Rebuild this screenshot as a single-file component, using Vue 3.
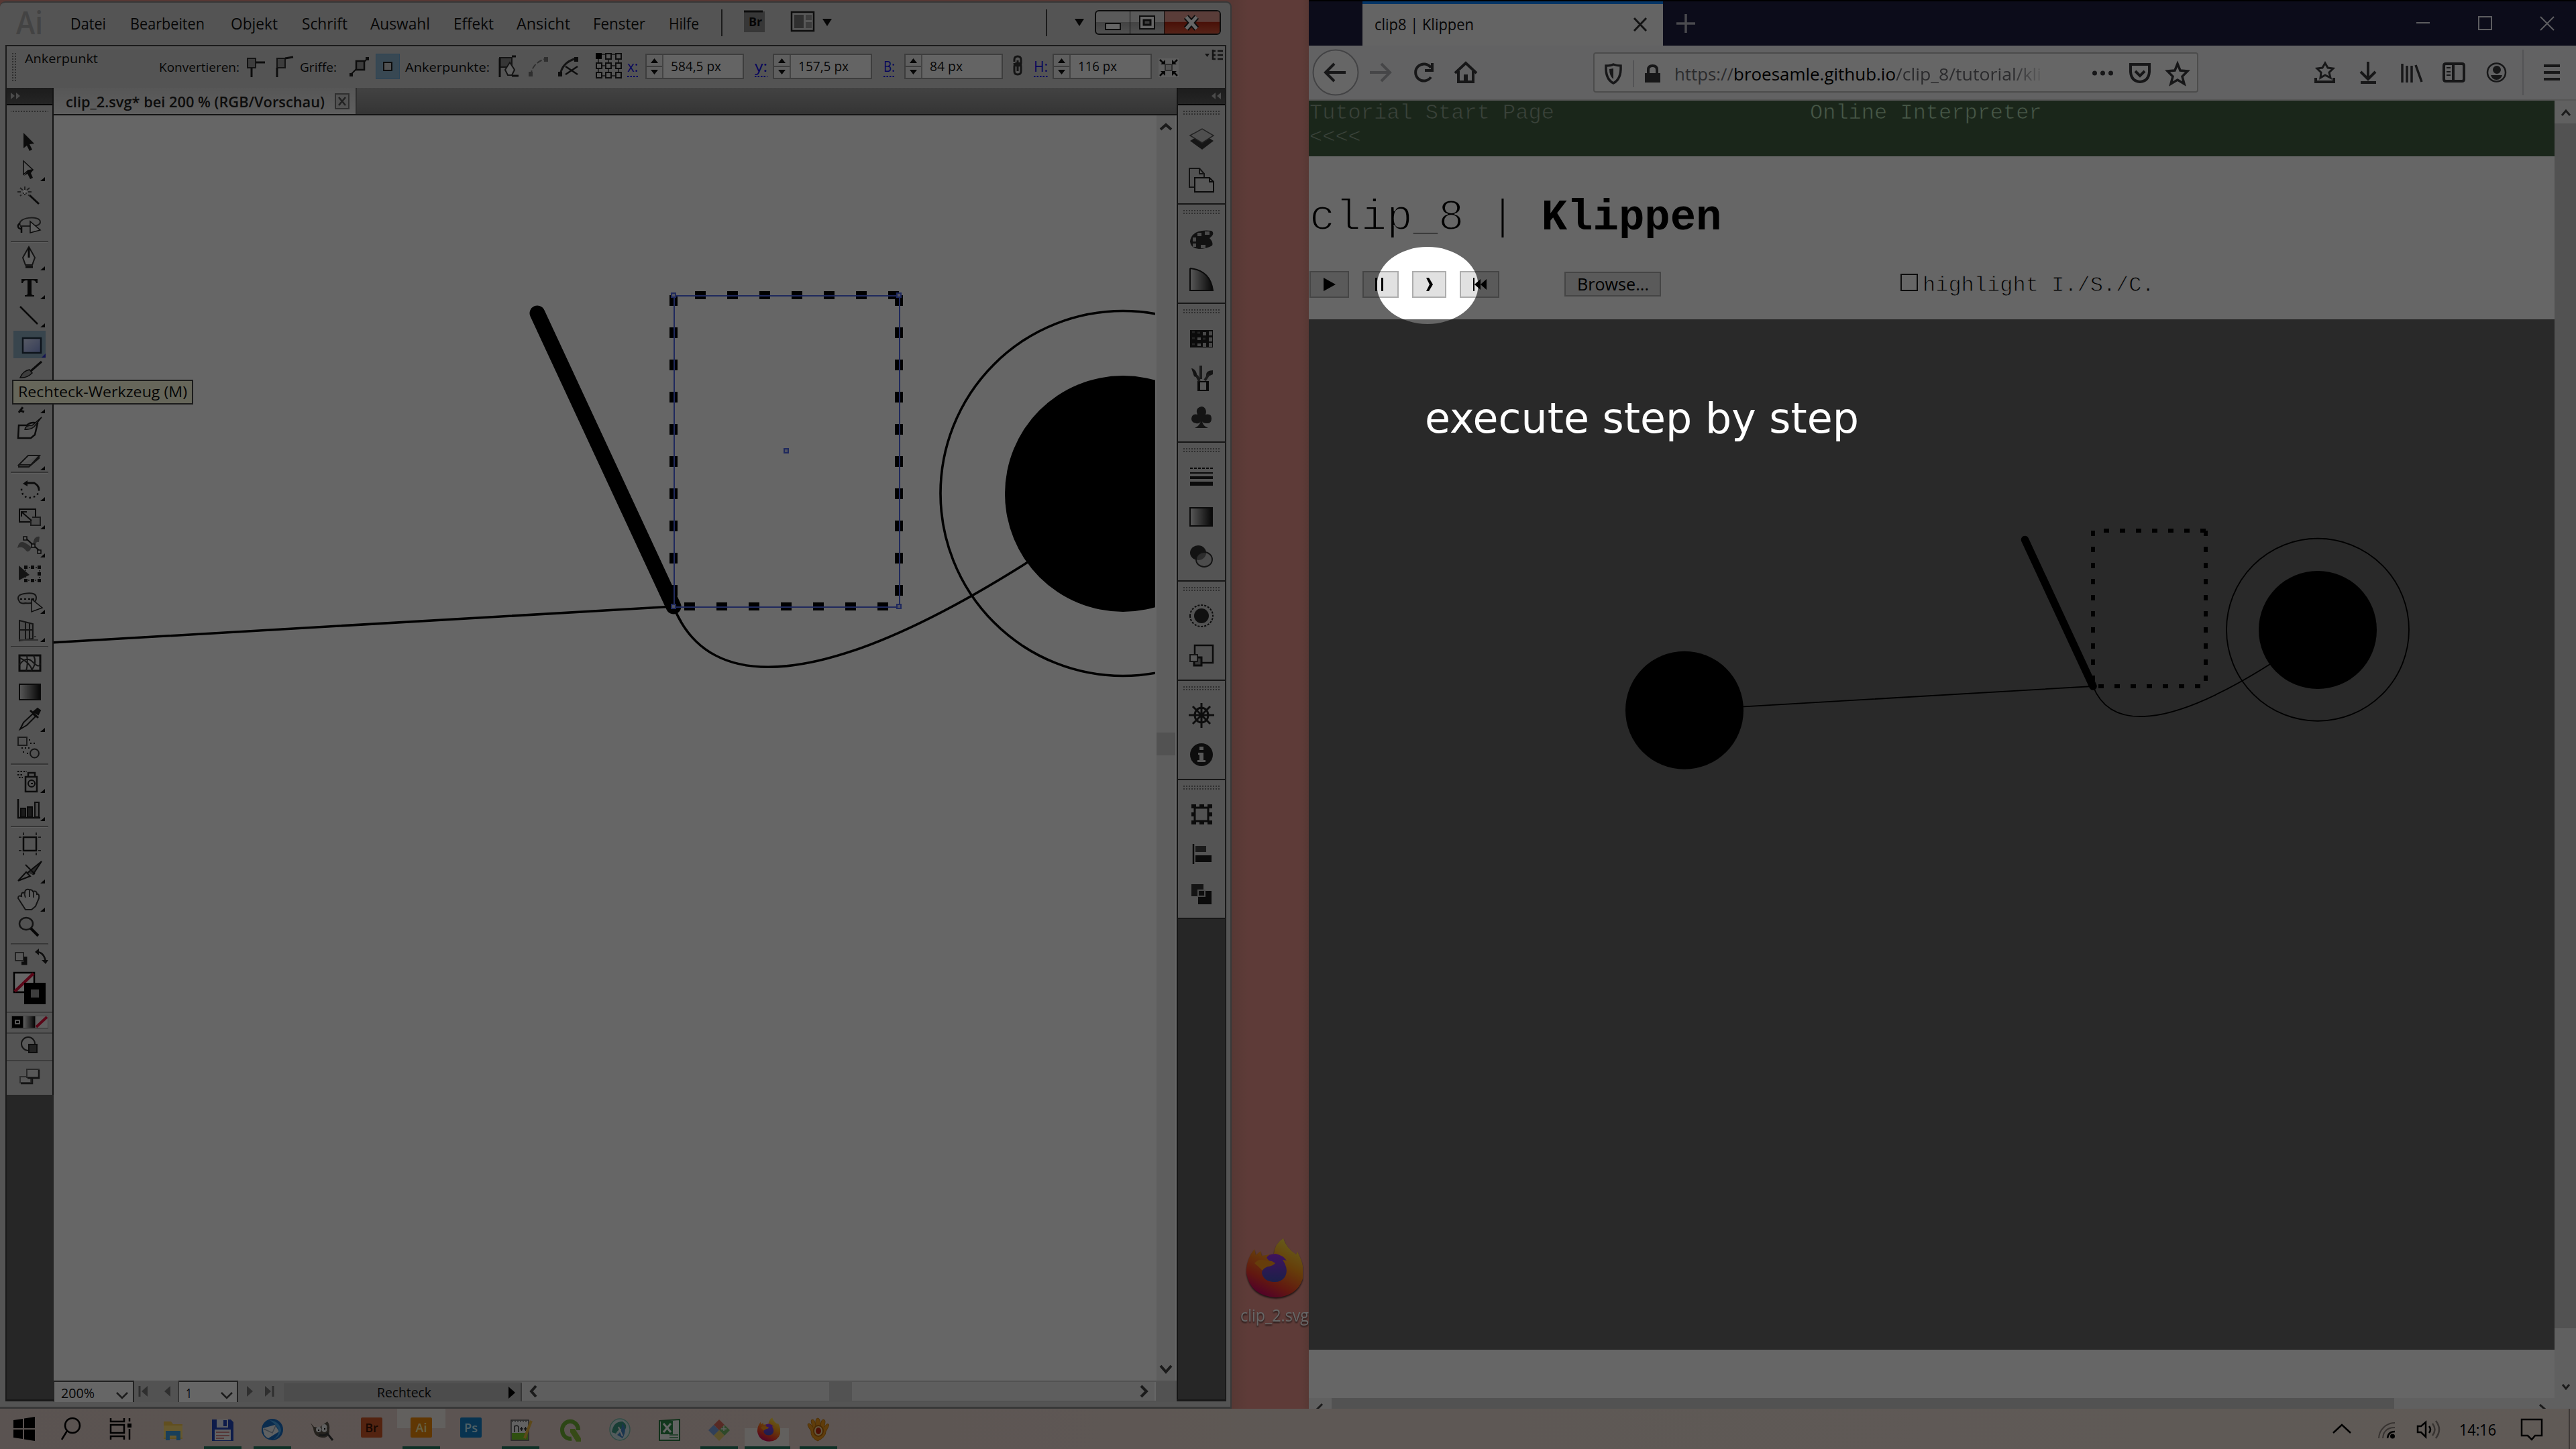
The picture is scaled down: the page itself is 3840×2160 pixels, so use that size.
<script setup>
import { h } from 'vue'

// Single line of real text, fitted to a given advance width.
const T = (p) =>
  h('svg', { width: p.w + (p.gap || 0), height: p.h || 40, class: 'txt' }, [
    h('text', {
      x: p.gap || 0, y: p.b || 28, textLength: p.w, lengthAdjust: 'spacingAndGlyphs',
      'font-size': p.s || 24, fill: 'currentColor'
    }, p.t)
  ])

// Icon: list of [path, fill, stroke, stroke width, dash].
const Glyph = (p) =>
  h('svg', { width: p.w, height: p.h, viewBox: `0 0 ${p.w} ${p.h}` },
    p.d.map((e) => h('path', {
      d: e[0], fill: e[1] || 'none', stroke: e[2] || 'none', 'stroke-width': e[3] || 2, 'stroke-dasharray': e[4]
    })))

// The clip_8 drawing shared by the editor and the browser page.
const Drawing = () =>
  h('g', { fill: 'none', stroke: '#000', 'stroke-width': 3.6 }, [
    h('path', { d: 'M-215 975L1004 904C1056 1035 1225 1032 1532 838' }),
    h('circle', { cx: -214, cy: 975.5, r: 176, fill: '#000', stroke: 'none' }),
    h('circle', { cx: 1674, cy: 735.5, r: 272 }),
    h('circle', { cx: 1674, cy: 736, r: 176, fill: '#000', stroke: 'none' }),
    h('path', { d: 'M801 467L1004 904', 'stroke-width': 23, 'stroke-linecap': 'round' }),
    h('path', { d: 'M1340 440V904H1004V440H1340', 'stroke-width': 12, 'stroke-dasharray': '16 32' })
  ])

const K = '#1c1c1c'
const FLY = ['M50 38h7v-6z', '#111']
const toolGroups = [
  [
    [['M25 8l16 16-7 1 4 8-4 2-4-8-5 4z', '#1c1c1c']],
    [['M25 8l14 13-7 1-7 6z', '#ddd', K, 1.5], ['M32 22l8-1-4 5 3 7-4 2-4-8-5 3z', K], FLY],
    [['M34 17l14 13', '', K, 3], ['M16 12h22M27 4v16M20 6l14 12M34 6l-14 12', '', '#555', 2, '5 3'], ['M24 12h6M27 9v6', '', '#fff', 2]],
    [['M20 20c-6-12 30-16 30-5 0 5-8 6-14 6H20', '', '#444', 2], ['M20 17a4 4 0 1 0 2 8M22 22v9', '', K, 2.5], ['M35 14l15 13-15 4z', '#eee', K, 1.5]]
  ],
  [
    [['M33 3l9 16-4 11H28l-4-11z', '#e8e8e8', '#333', 2], ['M33 4v15M28 33h11', '', K, 3], FLY],
    [['M22 8h24v6h-2q-1-4-5-4h-2v20q0 2 4 2v2H27v-2q4 0 4-2V10h-2q-4 0-5 4h-2z', '#151515'], FLY],
    [['M20 7L46 33', '', K, 2.5], FLY],
    [],
    [['M52 4L36 18', '', K, 3], ['M20 28q4-10 14-12l4 5q-8 8-18 7z', '#999', K, 1.5]],
    [['M18 37l6-8M20 34l6 2', '', K, 3], FLY],
    [['M18 14h12q6-6 16-3l-4 17-6 5H17z', '#ddd', K, 2.5], ['M52 2L38 14q-10 0-11 6 8 1 14-4z', '#aaa', K, 1.5]],
    [['M18 30l14-14h17L36 30zM18 30v3h15l15-13v-4', '#e0e0e0', '#333', 2], FLY]
  ],
  [
    [['M24 12l7-5v9z', K], ['M27 11h14q6 3 7 9', '', K, 3], ['M48 20q0 12-14 13-12-1-12-14', '', K, 2.5, '2.5 4'], FLY],
    [['M19 8h24v19H19z', '#ccc', K, 2], ['M38 20h12v12H36v-8', '#bbb', '#444', 2], ['M22 12l15 13M22 19v-7h8', '', K, 2], FLY],
    [['M16 24q2-12 11-8 6 3 10 7-4 9-8 5-6-8-13-4zM39 18q2-13 10-11l-1 8q-5-2-6 7z', '#777'], ['M28 9l23 21', '', K, 2], ['M25 7h5v5h-5zM37 18h5v5h-5zM46 27h5v5h-5z', '#ddd', K, 1.5], FLY],
    [['M18 8l16 14-16 8z', '#333'], ['M28 11h21v19H28z', '', '#333', 1.5, '2 3'], ['M26 8h5v5h-5zM36 8h5v5h-5zM46 8h5v5h-5zM46 18h5v5h-5zM26 28h5v5h-5zM36 28h5v5h-5zM46 28h5v5h-5z', K]],
    [['M18 18q-4-8 8-10 18-3 18 6 0 10-16 8-8 2-10-4z', '#ccc', '#333', 2], ['M20 16h22', '', K, 2, '3 3'], ['M37 16l16 13-16 6z', '#ddd', K, 1.5], FLY],
    [['M19 6l20 5v22l-20 3zM19 20h20M28 8v26M34 10v24', '#bbb', '#333', 2], ['M19 35h28M39 30h5', '', '#777', 2], FLY]
  ],
  [
    [['M19 8h31v23H19z', '#ddd', K, 3], ['M19 22q10-14 20-4t11 2M30 8q2 12-1 23M40 8q6 12-4 23M20 12q14 6 18 18', '', '#333', 2]],
    [['M19 9h31v23H19z', 'url(#gray)', K, 2]],
    [['M40 8l6-5 4 3-3 6z', '#222', K, 2], ['M20 34l5-10 14-13 4 4-13 13z', '#ccc', K, 2], ['M35 6l12 11', '', K, 3], FLY],
    [['M17 4h13v12H17z', '#ccc', '#444', 2], ['M33 8h4M35 13h8M22 20h14M24 26h4M30 28h4', '', K, 2, '2 3'], ['M35 28a6 6 0 1 0 13 0 6 6 0 1 0-13 0', '#ccc', '#333', 2]]
  ],
  [
    [['M16 6h14M16 11h8M18 15h6', '', K, 2, '2.5 2'], ['M28 14h17v22H28zM32 8h10v6H32z', '#ccc', '#222', 2.5], ['M32 24a5 5 0 1 0 10 0 5 5 0 1 0-10 0M36 24h3', '', K, 2], FLY],
    [['M17 5v28h33', '', K, 2.5], ['M21 19h7v13h-7zM31 17h7v15h-7z', '#444', K, 2], ['M42 10h6v22h-6z', '#bbb', '#222', 2], FLY]
  ],
  [
    [['M25 11h19v20H25z', '', K, 2.5], ['M25 4v4M44 4v4M25 34v4M44 34v4M18 11h4M47 11h4M18 31h4M47 31h4', '', '#444', 2]],
    [['M17 34l12-13 6 6z', '#ccc', K, 2], ['M31 22l21-17-13 20M28 10l14 14', '#666', K, 2], FLY],
    [['M17 18q0-5 5-3-1-7 5-5 0-6 6-5 5 0 6 3 6-2 6 4 4-1 3 6l-5 12-6 5H28z', '#e2e2e2', '#333', 2], ['M26 10l2 7M34 6v10M40 9v8', '', '#444', 2], FLY],
    [['M19 14a10 9 0 1 0 20 0 10 9 0 1 0-20 0', '#ccc', '#333', 2.5], ['M36 21l11 11', '', '#111', 4]]
  ]
]

const dockGroups = [
  [
    [['M18 22l18-11 17 11-17 13z', '#383838'], ['M18 14l18-10 17 10-17 11z', '#c6c6c6', '#555', 1.5]],
    [['M17 4h15l7 8v20H17zM32 4v8h7', '#ccc', '#333', 2], ['M25 18h22l6 6v15H25zM47 18v6h6', '#ddd', K, 2]]
  ],
  [
    [['M18 24Q20 5 50 8q6 4-3 11 6 6 4 11-8 5-20 5-12-1-13-11z', '#2c2c2c'], ['M22 18h5v6h-5zM29 11h6v5h-6zM40 9h7v5h-7zM22 27h5v5h-5zM34 29h7v5h-7z', '#bbb']],
    [['M18 5v33h34Q48 8 18 5', 'url(#gray)', K, 2]]
  ],
  [
    [['M18 8h34v26H18z', K], ['M29 19h5v4h-5zM37 11h5v5h-5zM46 10h5v6h-5zM46 19h5v6h-5zM29 28h5v4h-5zM37 27h5v6h-5zM46 27h5v6h-5z', '#b5b5b5'], ['M21 11h4M21 20h4M21 29h4M29 12h4M37 21h4', '', '#555', 3]],
    [['M29 25h17v15H29z', K], ['M33 27h9v11h-9z', '#ddd'], ['M20 6q8 1 9 14l-5-2zM42 16q0-7 10-7v6q-5 3-10 3z', '#333'], ['M34 2v20M40 24l6-9M28 17l4 8', '', '#444', 4]],
    [['M35 3a7 8 0 0 1 6 12q9-2 9 6t-8 7q-5 0-6-3 1 7 9 10H25q7-3 9-10-2 4-7 3-7-1-7-7 1-8 9-6-4-10 6-12z', '#333']]
  ],
  [
    [['M18 7h34', '', K, 2, '4 2'], ['M18 14h34', '', K, 2], ['M18 21h34', '', K, 4], ['M18 30h34', '', K, 6]],
    [['M18 7h33v27H18z', 'url(#gray)', K, 2]],
    [['M18 14a12 11 0 1 1 24 0 12 11 0 1 1-24 0', '#303030'], ['M27 24a12 11 0 1 1 24 0 12 11 0 1 1-24 0', '#aaa8', '#333', 2]]
  ],
  [
    [['M18 20a17 16 0 1 1 34 0 17 16 0 1 1-34 0', '#d0d0d0', K, 2, '3 2'], ['M24 20a11 11 0 1 1 22 0 11 11 0 1 1-22 0', '#2a2a2a']],
    [['M25 5h27v26H25z', '#c8c8c8', K, 2.5], ['M24 23h11v12H24z', '#888', K, 3], ['M18 19h11v10H18z', '#ddd', '#333', 2]]
  ],
  [
    [['M25 20a10 11 0 1 1 20 0 10 11 0 1 1-20 0M35 2v37M16 20h38M22 7l26 26M48 7L22 33', '', '#222', 3]],
    [['M18 20a17 17 0 1 1 34 0 17 17 0 1 1-34 0', '#222'], ['M32 8h6v5h-6zM30 17h8v11h3v3H29v-3h3v-8h-2z', '#ddd']]
  ],
  [
    [['M25 10h20v20H25z', '#ccc', K, 3], ['M20 5h7v6h-7zM32 5h7v6h-7zM44 5h7v6h-7zM20 17h5v6h-5zM46 17h5v6h-5zM20 29h7v6h-7zM32 29h7v6h-7zM44 29h7v6h-7z', K]],
    [['M23 5v30', '', K, 2.5], ['M26 8h16v9H26z', '#444'], ['M26 22h24v10H26z', K]],
    [['M20 5h18v18H20z', '#333'], ['M30 15h20v20H30z', K], ['M30 14h10v9H30z', '#222', '#bbb', 2]]
  ]
]

const menus = [
  ['Datei', 53, 41], ['Bearbeiten', 111, 36], ['Objekt', 70, 39], ['Schrift', 68, 36], ['Auswahl', 89, 34],
  ['Effekt', 60, 35], ['Ansicht', 80, 34], ['Fenster', 78, 34], ['Hilfe', 45, 35]
]
const fields = [
  { k: 'x:', kw: 16, gap: 8, to: 11, v: '584,5 px', vw: 75 },
  { k: 'y:', kw: 19, gap: 16, to: 8, v: '157,5 px', vw: 75 },
  { k: 'B:', kw: 17, gap: 17, to: 14, v: '84 px', vw: 49 },
  { k: 'H:', kw: 21, gap: 13, to: 7, v: '116 px', vw: 58, chain: true }
]
const chain = [['M9 15v-3q0-5 5-5t5 5v5q0 4-5 4t-5-4M9 22q0-5 5-5t5 5v7q0 5-5 5t-5-5zM14 13v16', '', '#333', 3]]

const convertIcons = [
  ['M2 20h12v14H2z', '#999', '#333', 2], ['M14 26h14M8 34v14', '', '#222', 3],
  ['M46 20h12v14H46z', '#999', '#333', 2], ['M46 48V34M58 20l12-2', '', '#222', 3]
]
const handleIcons = [['M10 24h12v13H10z', '#999', '#222', 2.5], ['M1 45l9-9M22 25l6-6', '', '#222', 2], ['M0 42h5v5H0zM24 18h5v5h-5z', '#222']]
const pointIcons = [
  ['M2 19h18v14H2z', '#888', '#333', 2], ['M2 48V20M20 17h6M20 46h10', '', '#222', 3], ['M17 26l7 11-4 8h-6l-4-8z', '#eee', '#333', 2],
  ['M48 46q2-20 24-26', '', '#777', 2, '8 3'], ['M45 40h6v7h-6zM68 18h6v7h-6z', '#777'],
  ['M92 46q2-20 24-26', '', '#333', 3], ['M89 40h6v7h-6zM113 18h6v7h-6z', '#222'], ['M100 32l18 12M118 32l-18 12', '', '#222', 2.5]
]
const refGrid = [
  ['M2 14h36M2 31h36M2 46h36M5 12v34M20 12v34M35 12v34', '', '#333', 1.5],
  ['M1 12h9v9H1z', '#000'],
  ['M16 13h8v8h-8zM31 13h8v8h-8zM2 27h8v8H2zM16 27h8v8h-8zM31 27h8v8h-8zM2 41h8v8H2zM16 41h8v8h-8zM31 41h8v8h-8z', '#ddd', '#222', 2]
]
const expand = [
  ['M0 20h30v28H0z', '#e8e8e8'], ['M10 29h10v9H10z', '#ccc', '#777', 2],
  ['M2 22l6 6M28 22l-6 6M2 46l6-6M28 46l-6-6', '', '#111', 2.5], ['M3 29h7v-7zM27 29h-7v-7zM3 39h7v7zM27 39h-7v7z', '#111']
]

const task = [
  { n: 'files', d: [['M4 6h11l3 4h14v22H4z', '#f3c64f'], ['M4 12h28v18H4z', '#ffdb70'], ['M7 20h22v14h-6v-7H13v7H7z', '#3f9fe0']] },
  { n: 'save', run: 1, d: [['M2 3h28l4 4v28H2z', '#2348b8'], ['M9 3h17v12H9z', '#e6ebf5'], ['M19 4h5v9h-5z', '#2348b8'], ['M6 18h24v16H6z', '#f4f4f4'], ['M8 22h20M8 27h20M8 31h12', '', '#c66', 1.5]] },
  { n: 'mail', run: 1, d: [['M2 18A16 16 0 1 1 18 34Q6 33 2 22z', '#1b6fc4'], ['M4 16l18-5 6 10-16 10Q4 28 4 16z', '#eef2f6'], ['M5 17l13 6 5-11', '', '#9ab', 1.5], ['M14 4Q30 6 31 20q-3 10-12 13Q38 20 14 4z', '#4aa8ee']] },
  { n: 'gimp', d: [['M1 8l5 6 8 1 12-9q4 5 3 12 1 13-11 12-12-1-13-14z', '#5c564c'], ['M9 18a4 4 0 1 1 8 0 4 4 0 1 1-8 0M18 16a4 4 0 1 1 7 0 4 4 0 1 1-7 0', '#eee'], ['M12 18h2v2h-2zM21 16h2v2h-2z', '#000'], ['M14 26q8 2 12-2l8 10', '', '#3b3b3b', 3]] },
  { n: 'br', tx: 'Br', bg: '#d0592a', fg: '#3a1406' },
  { n: 'ai', tx: 'Ai', bg: '#f08a08', fg: '#fff2b0', run: 1, top: 1 },
  { n: 'ps', tx: 'Ps', bg: '#1480c8', fg: '#c6f0ff' },
  { n: 'npp', run: 1, d: [['M4 4h26v30H4z', '#f4f4f4', '#555', 1.5], ['M5 23h24v10H5z', '#77c828'], ['M5 5h24', '', '#777', 3, '2 2'], ['M9 22v-9q6-2 6 2v7M17 17h5M23 17h5M19.500 14v6M25.500 14v6', '', '#333', 1.500], ['M34 5L24 31', '', '#e9b642', 4]] },
  { n: 'qgis', d: [['M20 31.500A12 13 0 1 1 30 19', '', '#6fae36', 6], ['M18 17h7l9 14v5h-7l-9-14z', '#87b83a']] },
  { n: 'globe', d: [['M3 18A15 16 0 1 1 33 18 15 16 0 1 1 3 18', '#cfe3e6', '#7ba', 1.5], ['M6 22Q8 6 22 6q8 5 4 12-8-5-14 6z', '#3c9a84'], ['M21 9q9 8 1 22l-8-5q8-6 7-17z', '#4484c4'], ['M16 14l6 14', '', '#eee', 2]] },
  { n: 'xls', d: [['M3 5l30-2v31H3z', '#f4f8f4', '#2d7b45', 2], ['M5 5h18v20H5z', '#2f8a4a'], ['M9 9l11 13M20 9L9 22', '', '#fff', 3], ['M18 26h13M18 30h13', '', '#68a878', 2]] },
  { n: 'git', run: 1, d: [['M18 3l8 8-8 8-8-8z', '#d96a5c'], ['M10 11l8 8-8 8-8-8z', '#7ba0dc'], ['M26 11l8 8-8 8-8-8z', '#76b768'], ['M18 19l8 8-8 8-8-8z', '#e2c76a'], ['M25 12v8M21 17h8', '', '#eee', 1.5]] },
  { n: 'ff', ff: 1, run: 1, bottom: 1 },
  { n: 'hand', run: 1, d: [['M7 20Q-1 9 4 9q3 0 6 6Q5 3 9 3q4 0 5 10Q13 1 17 1t4 12Q22 2 26 3t0 12q5-7 7-5 2 1-4 11 0 8-12 14Q6 30 7 20z', '#f09a1c', '#c47a10', 1], ['M11 20a7 8 0 1 1 14 0 7 8 0 1 1-14 0', '#f8dca0', '#b86808', 2], ['M14 20a4 5 0 1 1 8 0 4 5 0 1 1-8 0', '#c02a10']] }
]
const winLogo = [['M20 17l14-2v14H20zM36 14.500l16-2.500v17H36zM20 31h14v14l-14-2zM36 31h16v17l-16-2.500z', '#000']]
const searchIcon = [['M25 25a11 11 0 1 1 22 0 11 11 0 1 1-22 0M28 33L20 46', '', '#000', 2.5]]
const viewIcon = [['M21 14v5h20v-5M21 46v-5h20v5M21 24h20v12H21zM49 14v5M49 30v16', '', '#000', 2.5], ['M46 22h6v6h-6z', '#000']]

const F = '#3a3a3e'
const navIcons = [
  ['M6.500 40a33.500 33.500 0 1 1 67 0 33.500 33.500 0 1 1-67 0', '#fff', '#a8a8ac', 2],
  ['M26 40h29M38 27L25 40l13 13', '', F, 4],
  ['M91 40h29M108 27l13 13-13 13', '', '#b0b0b4', 4],
  ['M182 33A12.500 12.500 0 1 0 182 47M184 26v11h-11', '', F, 4],
  ['M218 41l16-15 16 15M223 38v16h22V38', '', F, 4], ['M231 43h6v12h-6z', F]
]
const rightIcons = [
  ['M36 26l4 7 8 1-6 6 2 8-8-4-7 4 1-8-6-6 8-1z', '', F, 3], ['M22 48v6h27v-6', '', F, 4],
  ['M100 24v25M89 39l11 11 11-11M89 55h23', '', F, 4],
  ['M151 27v28M158 30v25M165 30v25M171 29l9 25', '', F, 3.500],
  ['M213 30q0-3 3-3h24q3 0 3 3v20q0 3-3 3h-24q-3 0-3-3zM227 27v26', '', F, 4], ['M217 33h6M217 39h6M217 44h6', '', F, 2],
  ['M278 40a13.500 13.500 0 1 1 27 0 13.500 13.500 0 1 1-27 0', '', F, 2.5], ['M286 36a6 6 0 1 1 12 0 6 6 0 1 1-12 0M283 44h17q-2 7-8.500 7t-8.500-7z', F],
  ['M331 6v68', '', '#d0d0d4', 2],
  ['M362 30h24M362 40h24M362 50h24', '', F, 4]
]
const urlLeft = [
  ['M17 18q7 0 11-2 5 2 11 2 1 20-11 26Q16 38 17 18z', '', F, 3.500], ['M28 22v16q-6-5-6-15z', F],
  ['M58 10v40', '', '#d0d0d4', 2],
  ['M75 29h23v14H75z', F], ['M80 30v-6q0-6 6.500-6t6.500 6v6', '', F, 4]
]
const urlRight = [
  ['M3 29a3.500 3.500 0 1 1 7 0 3.500 3.500 0 1 1-7 0M15 29a3.500 3.500 0 1 1 7 0 3.500 3.500 0 1 1-7 0M27 29a3.500 3.500 0 1 1 7 0 3.500 3.500 0 1 1-7 0', F],
  ['M60 16h28v11q-1 14-14 15-13-1-14-15zM67 26l7 7 7-7', '', F, 4],
  ['M130 15l4 10 11 1-8 8 3 11-10-6-10 6 3-11-8-8 11-1z', '', F, 3.500]
]
const winCtl = [['M2 34h20M95 25h19v19H95zM187 25l20 20M207 25l-20 20', '', '#e8e8f0', 2]]
const trayIcons = [
  ['M13 36l13-12 13 12', '', '#000', 2.5],
  ['M81 44A24 24 0 0 1 105 21M87 44q1-16 18-16', '', '#8a807a', 2], ['M94 44q1-10 11-10', '', '#000', 2.5], ['M98 41a3.500 3.500 0 1 1 7 0 3.500 3.500 0 1 1-7 0', '#000'],
  ['M139 26h5l7-6v22l-7-7h-5zM156 26q4 5 0 10', '', '#000', 2.5], ['M161 22q7 9 0 18M166 18q10 13 0 26', '', '#8a807a', 2.5]
]
</script>

<template>
  <div class="desktop">
    <svg class="defs" width="0" height="0">
      <defs>
        <linearGradient id="gray"><stop offset="0" stop-color="#ddd" /><stop offset="1" stop-color="#111" /></linearGradient>
        <linearGradient id="blue" x2="1" y2="1"><stop offset="0" stop-color="#dfe6ff" /><stop offset="1" stop-color="#8497dc" /></linearGradient>
        <linearGradient id="fire" x1=".8" y1="0" x2=".3" y2="1"><stop offset="0" stop-color="#fff04a" /><stop offset=".4" stop-color="#ff9c1a" /><stop offset=".75" stop-color="#f43b2a" /><stop offset="1" stop-color="#c8006a" /></linearGradient>
        <linearGradient id="orb" x2="0" y2="1"><stop offset="0" stop-color="#a030e8" /><stop offset="1" stop-color="#4450b8" /></linearGradient>
        <symbol id="fox" viewBox="0 0 84 88">
          <path d="M12 16l2 9 7-6 2 7 18-3Q42 8 55 0q4 14 19 24l2-4q12 22 8 40-8 26-40 28Q6 86 0 52-1 32 12 16z" fill="url(#fire)" />
          <path d="M30 29q2-6 14-6 10 2 16 10l-6-1q10 15 3 26-6 8-17 7-14-1-17-13 0-9 8-10 6 0 10-5-6-1-11-8z" fill="url(#orb)" />
          <path d="M12 37q6-6 12-5l14 2 5 3q-3 4-11 5-6 2-8 6-6-6-12-11z" fill="#ff9a1c" />
        </symbol>
      </defs>
    </svg>

    <div class="shortcut">
      <svg width="84" height="88"><use href="#fox" /></svg>
      <T t="clip_2.svg" :w="102" :s="25" :b="30" />
    </div>

    <section class="ai">
      <header class="menubar">
        <span class="logo"><T t="Ai" :w="40" :s="47" :b="45" :h="60" /></span>
        <T v-for="m in menus" :key="m[0]" :t="m[0]" :w="m[1]" :gap="m[2]" :s="23.500" :b="38" :h="60" />
        <Glyph class="mid" :w="220" :h="60" :d="[['M33 8v40', '', '#444', 2], ['M66 11h31v31H66z', '#8a8a8a'], ['M66 11h28', '', '#222', 3], ['M137 12h33v28h-33z', '#ddd', '#222', 2.500], ['M141 16h14v20h-14z', '#777'], ['M158 16h9v8h-9zM158 27h9v9h-9z', '#999'], ['M183 22h14l-7 11z', '#111']]" />
        <span class="brlabel">Br</span>
        <Glyph class="right" :w="262" :h="60" :d="[['M3 8v40', '', '#444', 2], ['M45 22h14l-7 11z', '#111']]" />
        <div class="winbtns">
          <Glyph :w="50" :h="33" :d="[['M14 18h22v9H14z', '#fff', '#222', 2]]" />
          <Glyph :w="50" :h="33" :d="[['M14 7h22v19H14z', '#fff', '#222', 2], ['M20 13h10v7H20z', '#999', '#222', 3]]" />
          <Glyph class="close" :w="84" :h="33" :d="[['M33 8l16 18M49 8L33 26', '', '#222', 9], ['M33 8l16 18M49 8L33 26', '', '#fff', 5]]" />
        </div>
      </header>

      <div class="options">
        <span class="grip" />
        <T t="Ankerpunkt" :w="109" :gap="13" :s="19" :b="25" :h="60" />
        <T t="Konvertieren:" :w="120" :gap="91" :s="19" :b="38" :h="60" />
        <Glyph class="g10" :w="74" :h="62" :d="convertIcons" />
        <T t="Griffe:" :w="55" :gap="6" :s="19" :b="38" :h="60" />
        <Glyph class="g19" :w="30" :h="62" :d="handleIcons" />
        <span class="on"><i /></span>
        <T t="Ankerpunkte:" :w="126" :gap="8" :s="19" :b="38" :h="60" />
        <Glyph class="g13" :w="122" :h="62" :d="pointIcons" />
        <Glyph class="g21" :w="40" :h="62" :d="refGrid" />
        <template v-for="f in fields" :key="f.k">
          <Glyph v-if="f.chain" class="chain" :w="30" :h="40" :d="chain" />
          <T class="key" :t="f.k" :w="f.kw" :gap="f.gap" :s="21" :b="38" :h="60" />
          <Glyph class="under" :w="f.to" :h="60" :d="[['M' + -f.kw + ' 45h' + f.kw, '', '#11e', 2, '2.500 2']]" />
          <span class="field">
            <Glyph class="spin" :w="23" :h="34" :d="[['M6 12h11l-5.500-7zM6 22h11l-5.500 7z', '#111'], ['M0 17h23', '', '#999', 2]]" />
            <T :t="f.v" :w="f.vw" :gap="11" :s="20" :b="24" :h="34" />
          </span>
        </template>
        <Glyph class="g12" :w="30" :h="62" :d="expand" />
        <Glyph class="g38" :w="30" :h="62" :d="[['M0 13h7l-3.500 5z', '#333'], ['M12 7v15M12 9h4M19 9h8M12 15h4M19 15h8M12 21h4M19 21h8', '', '#333', 2.500]]" />
      </div>

      <div class="work">
        <aside class="tools">
          <div class="dockhead left"><Glyph :w="20" :h="14" :d="[['M1 2l6 5-6 5zM9 2l6 5-6 5z', '#bbb']]" /></div>
          <div v-for="(g, i) in toolGroups" :key="i" class="tgroup" :class="'t' + i">
            <div v-for="(t, j) in g" :key="j" class="tool" :class="{ active: i === 1 && j === 3 }">
              <Glyph v-if="t.length" :w="68" :h="42" :d="t" />
              <Glyph v-else :w="68" :h="42" :d="[['M24 11h27v22H24z', 'url(#blue)', '#234', 2.500], ['M52 40h6v-6z', '#33c']]" />
            </div>
          </div>
          <Glyph class="swatches" :w="68" :h="100" :d="[
            ['M13 12h12v12H13z', '#ddd', '#555', 2], ['M22 28h6V18', '', '#222', 5],
            ['M44 11q12 0 14 15', '', '#222', 2.500], ['M42 11l6-5v10zM58 29l-6-6h10z', '#222'],
            ['M11 42h30v29H11z', '#fff', '#000', 2.500], ['M12 70l28-27', '', '#e0123c', 4.500],
            ['M26 57h32v32H26z', '#000'], ['M36 67h12v12H36z', '#999']]" />
          <Glyph class="modes" :w="68" :h="29" :d="[
            ['M6 4h56v20H6z', '#aaa'], ['M8 5h16v17H8z', '#000'], ['M13 11h6v5h-6z', 'none', '#ddd', 2],
            ['M26 5h16v17H26z', 'url(#gray)'], ['M44 5h17v17H44z', '#eee'], ['M44 21L60 6', '', '#e0123c', 4]]" />
          <Glyph class="modes" :w="68" :h="39" :d="[['M22 15a10 10 0 1 1 20 0 10 10 0 1 1-20 0', '#ddd', '#333', 2], ['M33 16h12v12H33z', '#555', '#222', 2]]" />
          <Glyph :w="68" :h="48" :d="[['M20 23h16v9H20z', '#ddd', '#777', 2], ['M30 12h18v12H30z', '#ddd', '#666', 2], ['M21 33h17v-8M31 25h17V13', '', '#333', 2.500]]" />
        </aside>

        <main class="doc">
          <div class="tabs">
            <div class="tab">
              <T class="semi" t="clip_2.svg* bei 200 % (RGB/Vorschau)" :w="386" :s="21" :b="28" :h="38" />
              <Glyph :w="24" :h="26" :d="[['M2 2h20v22H2z', '#ccc', '#777', 2], ['M7 7l10 12M17 7L7 19', '', '#555', 2.500]]" />
            </div>
          </div>
          <div class="canvasrow">
            <svg class="canvas" width="1642" height="1886" viewBox="80 172 1642 1886">
              <Drawing />
              <g fill="none" stroke="#4f66e8" stroke-width="2">
                <path d="M1005 441h336v464h-336z" />
                <path d="M1001 437h6v6h-6zM1337 437h6v6h-6zM1001 901h6v6h-6zM1337 901h6v6h-6zM1169 669h6v6h-6z" fill="#c8ccf0" />
              </g>
            </svg>
            <div class="vscroll">
              <Glyph :w="28" :h="34" :d="[['M6 21l8-7 8 7', '', '#444', 4]]" />
              <i />
              <Glyph :w="28" :h="34" :d="[['M6 12l8 9 8-9', '', '#444', 4]]" />
            </div>
          </div>
          <div class="status">
            <div class="sel zoomsel"><T t="200%" :w="50" :gap="10" :s="20" :b="24" :h="32" /><Glyph :w="24" :h="32" :d="[['M4 16l8 8 8-8', '', '#444', 2.500]]" /></div>
            <Glyph :w="66" :h="32" :d="[['M8 8v16', '', '#777', 3], ['M20 8v16l-9-8zM54 8v16l-9-8z', '#777']]" />
            <div class="sel pagesel"><T t="1" :w="9" :gap="10" :s="20" :b="24" :h="32" /><Glyph :w="24" :h="32" :d="[['M4 16l8 8 8-8', '', '#444', 2.500]]" /></div>
            <Glyph :w="68" :h="32" :d="[['M13 8v16l9-8zM40 8v16l9-8z', '#777'], ['M52 8v16', '', '#777', 3]]" />
            <div class="toolname"><T t="Rechteck" :w="81" :gap="6" :s="20" :b="21" :h="28" /><Glyph class="more" :w="20" :h="28" :d="[['M5 5v18l10-9z', '#000']]" /></div>
            <div class="hscroll">
              <Glyph :w="40" :h="28" :d="[['M21 6l-7 8 7 8', '', '#444', 4]]" />
              <i />
              <Glyph :w="30" :h="28" :d="[['M10 6l8 8-8 8', '', '#444', 4]]" />
            </div>
          </div>
        </main>

        <aside class="dock">
          <div class="dockhead"><Glyph :w="20" :h="14" :d="[['M8 2L2 7l6 5zM16 2l-6 5 6 5z', '#bbb']]" /></div>
          <div v-for="(g, i) in dockGroups" :key="i" class="dgroup">
            <span class="dots" />
            <div v-for="(t, j) in g" :key="j" class="ditem"><Glyph :w="70" :h="42" :d="t" /></div>
          </div>
        </aside>
      </div>
      <div class="tooltip"><T t="Rechteck-Werkzeug (M)" :w="252" :s="22" :b="24" :h="34" /></div>
    </section>

    <section class="ff">
      <header class="tabstrip">
        <div class="fftab">
          <T t="clip8 | Klippen" :w="148" :s="23" :b="39" :h="60" />
          <Glyph :w="24" :h="60" :d="[['M2 21l18 19M20 21L2 40', '', '#333', 3]]" />
        </div>
        <Glyph class="plus" :w="30" :h="68" :d="[['M1 35h28M15 21v28', '', '#b8b8c4', 3.500]]" />
        <Glyph class="ctl" :w="212" :h="68" :d="winCtl" />
      </header>
      <div class="fftools">
        <Glyph :w="260" :h="80" :d="navIcons" />
        <div class="url">
          <Glyph :w="106" :h="60" :d="urlLeft" />
          <T class="dim" t="https://" :w="88" :gap="13" :s="26" :b="40" :h="58" />
          <T class="host" t="broesamle.github.io" :w="242" :s="26" :b="40" :h="58" />
          <T class="dim fade" t="/clip_8/tutorial/kli" :w="217" :s="26" :b="40" :h="58" />
          <Glyph class="end" :w="160" :h="60" :d="urlRight" />
        </div>
        <Glyph class="fr" :w="410" :h="80" :d="rightIcons" />
      </div>
      <div class="ffbody">
        <div class="page">
          <nav class="pagenav">
            <div class="start">Tutorial Start Page<br />&lt;&lt;&lt;&lt;</div>
            <div class="interp">Online Interpreter</div>
          </nav>
          <h1>clip_8 | <b>Klippen</b></h1>
          <div class="controls">
            <button class="b1"><svg width="24" height="24"><path d="M3 2v20l18-10z" /></svg></button>
            <button class="b2"><svg width="24" height="24"><path d="M4 2h3v20H4zM13 2h3v20h-3z" /></svg></button>
            <button class="b3"><svg width="24" height="24"><path d="M7 2h4l6 10-6 10H7l5-10z" /></svg></button>
            <button class="b4"><svg width="24" height="24"><path d="M2 2h2v20H2zM13 4v16L4 12zM22 4v16l-9-8z" /></svg></button>
            <button class="browse"><T t="Browse..." :w="107" :s="26" :b="27" :h="35" /></button>
            <span class="check" />
            <label>highlight I./S./C.</label>
          </div>
          <svg class="stage" width="1857" height="1536" viewBox="1951 476 1857 1536">
            <g transform="translate(2618 571) scale(.5)"><Drawing /></g>
          </svg>
          <div class="blank" />
          <div class="pagescroll">
            <Glyph :w="34" :h="16" :d="[['M20 9l-8 8', '', '#444', 3]]" />
            <i />
            <Glyph class="end" :w="34" :h="16" :d="[['M12 10l8 7', '', '#444', 3]]" />
          </div>
        </div>
        <div class="ffscroll">
          <Glyph :w="32" :h="34" :d="[['M11 22l6-7 6 7', '', '#444', 3]]" />
          <i />
          <Glyph class="bot" :w="32" :h="34" :d="[['M12 16l5 6 5-6', '', '#444', 3]]" />
        </div>
      </div>
    </section>

    <footer class="taskbar">
      <Glyph :w="72" :h="60" :d="winLogo" />
      <Glyph :w="72" :h="60" :d="searchIcon" />
      <Glyph :w="77" :h="60" :d="viewIcon" />
      <div v-for="a in task" :key="a.n" class="app" :class="{ run: a.run, top: a.top, bottom: a.bottom }">
        <Glyph v-if="a.d" :w="36" :h="38" :d="a.d" />
        <svg v-else-if="a.ff" width="34" height="36"><use href="#fox" /></svg>
        <svg v-else width="32" height="32"><rect width="32" height="30" rx="2" :fill="a.bg" /><text x="16" y="22" text-anchor="middle" font-size="18" font-weight="600" :fill="a.fg">{{ a.tx }}</text></svg>
      </div>
      <div class="tray">
        <Glyph :w="201" :h="60" :d="trayIcons" />
        <T t="14:16" :w="55" :s="24" :b="40" :h="60" />
        <Glyph :w="119" :h="60" :d="[['M38 16h30v24H58l-5 6-6-6h-9z', '', '#000', 2.500], ['M109 0v60', '', '#9c9088', 2]]" />
      </div>
    </footer>

    <svg class="shade" width="3840" height="2160">
      <path fill-rule="evenodd" fill="#000" fill-opacity=".6" d="M0 0H3840V2160H0ZM2052.500 425.500a75.500 57.500 0 1 0 151 0a75.500 57.500 0 1 0-151 0Z" />
      <text x="2124" y="645" font-size="63" fill="#fff" textLength="647" lengthAdjust="spacingAndGlyphs">execute step by step</text>
    </svg>
  </div>
</template>

<style>
body { margin: 0; background: #e8958c; }
</style>

<style scoped>
.desktop { position: relative; width: 3840px; height: 2160px; overflow: hidden; background: linear-gradient(90deg, #d98c82 1836px, #ea958d 1860px, #ea958d 1940px, #d98c82 1951px); font-family: "Open Sans", "Noto Sans", sans-serif; color: #111; }
.desktop svg { display: block; flex: none; }
.desktop svg.defs { position: absolute; }
.desktop svg.txt, .desktop svg.under { overflow: visible; }
.shortcut { position: absolute; left: 1848px; top: 1846px; width: 103px; display: flex; flex-direction: column; align-items: center; gap: 6px; color: #fff; filter: drop-shadow(0 2px 1px #000a); }

.ai { position: absolute; left: 0; top: 2px; width: 1836px; height: 2098px; box-sizing: border-box; padding: 2px 8px 8px; background: #d2d2d2; border: solid #8c8c8c; border-width: 2px 2px 3px 0; border-radius: 8px 8px 0 0; display: flex; flex-direction: column; }
.menubar { display: flex; height: 60px; padding-left: 16px; align-items: flex-start; margin-bottom: 1px; }
.logo { width: 40px; color: #a9a9a9; font-weight: 600; }
.mid { margin-left: 1px; }
.brlabel { width: 0; position: relative; left: -147px; top: 14px; font-size: 18px; font-weight: 700; }
.right { margin-left: 294px; margin-right: -187px; }
.winbtns { display: flex; height: 33px; margin-top: 9px; border: 2px solid #222; border-radius: 6px; overflow: hidden; background: linear-gradient(#e2e2e2 48%, #a8a8a8 50%, #c8c8c8); }
.winbtns > svg + svg { border-left: 1px solid #222; }
.winbtns .close { width: 82px; background: linear-gradient(#e29a90 46%, #b62a14 50%, #d85a40); }

.options { display: flex; height: 62px; border: 2px solid #444; border-bottom: 0; margin: 0 -2px 0 0; background: linear-gradient(#dcdcdc, #d2d2d2 6px); }
.grip { width: 6px; height: 42px; margin: 10px 0 0 8px; background: radial-gradient(circle at 1px 1px, #777 1px, transparent 1.500px) 0 0 / 4px 4px; }
.g10 { margin-left: 10px; } .g19 { margin-left: 19px; } .g12 { margin-left: 10px; } .g13 { margin-left: 13px; } .g21 { margin-left: 22px; } .g38 { margin-left: 39px; }
.options > svg { margin-top: -2px; }
.options > .txt, .options > .under { margin-top: 0; }
.on { width: 34px; height: 36px; margin: 11px 0 0 9px; border: 1px solid #69a9d6; background: #8db4d0; display: flex; align-items: center; justify-content: center; }
.on i { width: 10px; height: 10px; background: #ccc; border: 2px solid #222; }
.key { color: #1111e6; }
.chain { margin-left: 8px; margin-right: -5px; }
.options > .chain { margin-top: 8px; }
.field { display: flex; width: 144px; height: 34px; margin-top: 11px; border: 2px solid #999; background: #fbfbfb; }
.spin { background: #eee; border-right: 2px solid #aaa; }

.work { display: flex; flex: 1; min-height: 0; margin-right: -2px; background: #606060; border: solid #404040; border-width: 0 2px 3px; }
.tools { width: 68px; border-right: 2px solid #333; height: 1501px; background: #d2d2d2; }
.dockhead { height: 24px; display: flex; align-items: center; justify-content: flex-end; background: linear-gradient(#484848, #5c5c5c); border-bottom: 2px solid #111; }
.dockhead.left { justify-content: flex-start; padding-left: 5px; }
.tgroup { box-sizing: border-box; padding-top: 4px; border-bottom: 2px solid #888; box-shadow: 0 2px 0 -1px #eee; margin: 0 6px 0 6px; }
.tool { height: 42px; margin: 0 -6px; }
.t0 { height: 204px; padding-top: 33px; background: radial-gradient(circle at 1px 1px, #777 1px, transparent 1.500px) 3px 8px / 4px 5px repeat-x; }
.t1 { height: 344px; } .t1 .tool { height: 42.500px; }
.t2 { height: 260px; } .t3 { height: 175px; } .t4 { height: 93px; } .t5 { height: 175px; }
.active { background: linear-gradient(#8dacc0, #8dacc0) 10px 0 / 48px 41px no-repeat; }
.swatches, .modes { border-bottom: 2px solid #999; }

.doc { width: 1674px; display: flex; flex-direction: column; background: #fff; }
.tabs { height: 39px; background: linear-gradient(#a6a6a6, #848484); border-bottom: 2px solid #333; }
.tab { width: 452px; height: 39px; box-sizing: border-box; padding-left: 18px; display: flex; align-items: center; gap: 14px; background: linear-gradient(#d8d8d8, #eee); border-right: 2px solid #777; color: #222; }
.semi { font-weight: 600; }
.canvasrow { display: flex; justify-content: space-between; height: 1886px; }
.vscroll { width: 28px; margin-right: 2px; background: #ececec; display: flex; flex-direction: column; justify-content: space-between; position: relative; }
.vscroll i { position: absolute; top: 920px; left: 0; width: 28px; height: 34px; background: #cdcdcd; }
.status { display: flex; height: 32px; background: #cecece; }
.sel { box-sizing: border-box; height: 32px; border: solid #555; border-width: 2px 2px 0 1px; background: #fff; display: flex; justify-content: space-between; }
.zoomsel { width: 120px; padding-right: 4px; } .pagesel { width: 89px; padding-right: 3px; }
.toolname { width: 353px; height: 27px; margin-top: 4px; position: relative; display: flex; justify-content: center; background: #bdbdbd; border-right: 2px solid #888; }
.more { position: absolute; right: 3px; top: 0; }
.hscroll { width: 943px; height: 28px; margin-top: 2px; background: #ececec; position: relative; display: flex; justify-content: space-between; box-shadow: 2px 0 0 #fff; }
.hscroll i { position: absolute; left: 458px; top: 0; width: 34px; height: 28px; background: #cdcdcd; }

.dock { width: 70px; border-left: 2px solid #333; }
.dock .dockhead { padding-right: 2px; }
.dots { display: block; height: 6px; margin: 0 8px; position: relative; top: 8px; background: radial-gradient(circle at 1px 1px, #777 1px, transparent 1.500px) 0 0 / 4px 4px; }
.ditem { height: 59.500px; position: relative; top: 16px; display: flex; align-items: center; }
.dgroup { box-sizing: border-box; height: 148px; border-bottom: 2px solid #3a3a3a; background: #d2d2d2; }
.dgroup:nth-child(4), .dgroup:nth-child(5), .dgroup:nth-child(8) { height: 207px; }
.tooltip { position: absolute; left: 18px; top: 562px; width: 259px; height: 33px; padding-left: 7px; border: 2px solid #444; background: #ffffe1; }

.ff { position: absolute; left: 1951px; top: 0; width: 1889px; height: 2100px; background: #fff; display: flex; flex-direction: column; }
.tabstrip { height: 68px; box-sizing: border-box; border-top: 2px solid #000; background: #202042; display: flex; }
.fftab { width: 448px; box-sizing: border-box; margin-left: 80px; padding: 0 21px 0 18px; border-top: 4px solid #0a84ff; background: #f9f9fa; display: flex; justify-content: space-between; }
.plus { margin: -2px 0 0 19px; } .ctl { margin: -2px 28px 0 auto; }
.fftools { height: 80px; background: #f5f6f7; border-bottom: 2px solid #d8d8d8; display: flex; }
.url { display: flex; width: 898px; height: 56px; margin: 10px 0 0 164px; border: 2px solid #bdbdbd; border-radius: 4px; background: #fff; }
.dim { color: #6d6d72; } .host { color: #000; }
.fade { -webkit-mask-image: linear-gradient(90deg, #000 80%, #0002); mask-image: linear-gradient(90deg, #000 80%, #0002); }
.end { margin-left: auto; }
.url .end { margin-right: -1px; }
.fr { margin-left: 153px; }
.ffbody { display: flex; height: 1950px; }
.page { width: 1857px; display: flex; flex-direction: column; font-family: "Liberation Mono", monospace; }
.pagenav { display: flex; height: 83px; box-sizing: border-box; padding: 1px 0 0 1px; background: #425f42; font-size: 32px; line-height: 36px; -webkit-text-stroke: .7px #425f42; }
.start { width: 746px; color: #93a893; } .interp { color: #b4dcb4; }
h1 { margin: 0; height: 171px; font-size: 64px; line-height: 72px; font-weight: 400; box-sizing: border-box; padding: 56px 0 0 1px; white-space: pre; color: #000; -webkit-text-stroke: 2px #fff; }
h1 b { -webkit-text-stroke: 0; }
.controls { display: flex; height: 72px; align-items: flex-start; }
button { box-sizing: border-box; height: 40px; padding: 0; border: 2px solid #adadad; background: #e1e1e1; display: flex; align-items: center; justify-content: center; }
.b1 { width: 59px; margin-left: 1px; } .b2 { width: 54px; margin-left: 20px; } .b3 { width: 51px; margin-left: 20px; } .b4 { width: 59px; margin-left: 20px; }
.browse { width: 144px; height: 37px; margin: 1px 0 0 97px; font-family: "Open Sans", sans-serif; color: #000; }
.check { width: 22px; height: 22px; margin: 4px 7px 0 357px; border: 2px solid #222; background: #fff; }
label { font-size: 32px; line-height: 44px; color: #000; -webkit-text-stroke: .9px #fff; }
.stage { background: #666; }
.blank { flex: 1; }
.pagescroll { height: 16px; background: #f0f0f0; display: flex; overflow: hidden; }
.pagescroll i { width: 1584px; background: #cdcdcd; }
.ffscroll { width: 32px; background: #f0f0f0; display: flex; flex-direction: column; }
.ffscroll i { height: 1796px; background: #cdcdcd; }
.bot { margin-top: auto; margin-bottom: 18px; }

.taskbar { position: absolute; left: 0; top: 2100px; width: 3840px; height: 60px; display: flex; background: linear-gradient(90deg, #e2d0ca, #e8d4ce 30%, #ebdcd4 50%, #efe2d8); }
.app { width: 74px; height: 60px; box-sizing: border-box; padding-top: 13px; display: flex; justify-content: center; }
.app.run { background: linear-gradient(#2a7a62, #2a7a62) 9px 56px / 56px 4px no-repeat; }
.app.top { background: linear-gradient(#2a7a62, #2a7a62) 9px 56px / 56px 4px no-repeat, linear-gradient(#f6efec, #f6efec) 1px 0 / 72px 29px no-repeat; }
.app.bottom { background: linear-gradient(#2a7a62, #2a7a62) 1px 56px / 68px 4px no-repeat, linear-gradient(#f6efec, #f6efec) 1px 29px / 66px 29px no-repeat; }
.tray { display: flex; margin-left: auto; color: #000; }
.shade { position: absolute; left: 0; top: 0; font-family: "DejaVu Sans", sans-serif; }
</style>
